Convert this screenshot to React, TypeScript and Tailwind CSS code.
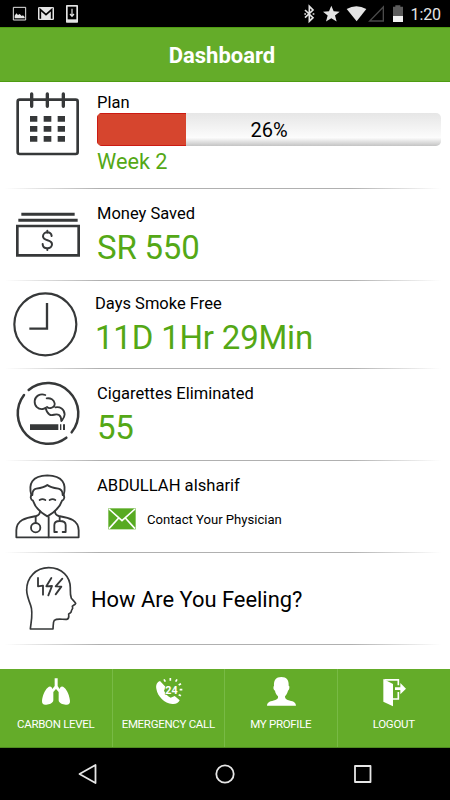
import type { ReactNode } from "react";
import clsx from "clsx";

const GREEN_TEXT = "text-[#54a816]";

function StatusBar() {
  return (
    <div className="flex h-[27px] items-center justify-between bg-black pl-[12px] pr-[9px]">
      <svg width="68" height="27" viewBox="36 0 204 81" className="text-[#e4e4e4]">
        <path d="M40 22h37v38H40z" fill="none" stroke="currentColor" strokeWidth="3" />
        <path d="M44 55V47l5-7 5 5 5-3 6 6 4-2 5 5v4z" fill="currentColor" />
        <rect x="114" y="21" width="48" height="39" rx="4" fill="currentColor" />
        <path d="M121 56V29l17 15 17-15v27" fill="none" stroke="#000" strokeWidth="5" />
        <rect x="198" y="15" width="36" height="53" rx="2" fill="currentColor" />
        <path d="M203 20h26v38h-26z" fill="#000" />
        <path d="M216 26v21M210 42l6 7 6-7" fill="none" stroke="currentColor" strokeWidth="3.5" />
      </svg>
      <div className="flex items-center">
        <svg width="106" height="27" viewBox="240 0 318 81" className="overflow-visible text-[#e4e4e4]">
          <path
            d="M240 30l24 23-11 11V19l11 11-24 23"
            fill="none"
            stroke="currentColor"
            strokeWidth="5"
          />
          <path d="M238 42h5M263 42h5" stroke="currentColor" strokeWidth="4" />
          <path
            d="M319 17l7 17 18 1.5-14 11 5 18-16-10-16 10 5-18-14-11 18-1.5z"
            fill="currentColor"
          />
          <path d="M365 27q29-17 59 0l-29 37z" fill="currentColor" />
          <path d="M475 21v42h-41z" fill="none" stroke="#4a4a4a" strokeWidth="4" />
          <path d="M504 20h7v-4h15v4h8v28h-30z" fill="#5c5c5c" />
          <path d="M504 48h30v18h-30z" fill="#f2f2f2" />
        </svg>
        <span className="pt-[2px] text-[16px] leading-[25px] tracking-[-0.1px] text-[#e6e6e6]">
          1:20
        </span>
      </div>
    </div>
  );
}

const ink = {
  fill: "none",
  stroke: "#363839",
  strokeLinejoin: "round",
  strokeLinecap: "round",
} as const;

function CalendarIcon() {
  return (
    <svg width="84" height="107" viewBox="0 -9 252 321">
      <rect x="53" y="44" width="180" height="163" rx="6" {...ink} strokeWidth="8" />
      <path d="M95 27v37M142 27v37M190 27v37" {...ink} strokeWidth="10" />
      {[93, 123, 153].map((y) => (
        <path key={y} d={`M90 ${y}h22v17h-22zM131 ${y}h23v17h-23zM173 ${y}h22v17h-22z`} fill="#363839" />
      ))}
    </svg>
  );
}

function MoneyIcon() {
  return (
    <svg width="84" height="92" viewBox="0 -33 252 276">
      <path d="M64 43h160M55 61h178" stroke="#363839" strokeWidth="9" />
      <path d="M52 78h184v88H52z" fill="none" stroke="#363839" strokeWidth="8" />
      <path
        d="M155 108c-1-7-6-11-13-11s-13 5-13 12c0 16 27 8 27 24 0 7-6 12-14 12s-14-5-14-13M142 92v6M142 145v5"
        {...ink}
        strokeWidth="6"
      />
    </svg>
  );
}

function ClockIcon() {
  return (
    <svg width="84" height="88" viewBox="0 3 252 264">
      <circle cx="136" cy="133" r="93" {...ink} strokeWidth="6.5" />
      <path d="M141 69v77H88" fill="none" stroke="#363839" strokeWidth="7" />
    </svg>
  );
}

function SmokingIcon() {
  return (
    <svg width="84" height="92" viewBox="0 -9 252 276">
      <path d="M86 54A91 91 0 0 1 215 181" {...ink} strokeWidth="7.5" />
      <path d="M72 69A91 91 0 0 0 199 197" {...ink} strokeWidth="7.5" />
      <path d="M90 157h85v17H90zM180 157h4v17h-4zM189 157h6v17h-6z" fill="#363839" />
      <path
        d="M136 69c-15-6-31 3-32 18s10 26 25 24c3 0 5-2 8-4 1 8 3 15 12 21 9 5 18-5 28 1 6 4 7 11 7 18"
        {...ink}
        strokeWidth="5.5"
      />
      <path
        d="M140 79c12-2 22 5 24 15 1 8-5 12-11 14-5 1-10-1-12-3M166 106c14-2 27 4 28 21 0 7-4 13-8 18"
        {...ink}
        strokeWidth="5.5"
      />
    </svg>
  );
}

function DoctorIcon() {
  return (
    <svg width="84" height="92" viewBox="0 -12 252 276">
      <g {...ink} strokeWidth="5.5">
        <path d="M94 90c-9-33 1-58 48-59 47 1 58 26 49 59" />
        <path d="M97 90c0-12 3-17 12-19 14-2 25-4 33-11 8 7 19 9 33 11 9 2 13 7 13 19" />
        <path d="M95 90c-5 5-3 14 4 17 6 19 20 34 43 47 23-13 38-28 44-47 7-3 9-12 4-17" />
        <path d="M119 105q8-5 17 0M149 105q9-5 17 0" />
        <path d="M120 139c0 8-4 12-11 14-34 6-59 12-60 43v21h187v-21c-1-31-26-37-60-43-7-2-11-6-11-14" />
        <path d="M146 156v61M107 155v18" />
        <circle cx="107" cy="188" r="14" />
        <path d="M179 155v13M171 201h-8v-21c0-8 5-12 16-12s18 4 18 12v21h-9" />
      </g>
    </svg>
  );
}

function MindIcon() {
  return (
    <svg width="84" height="92" viewBox="0 -6 252 276">
      <path
        d="M91 222c3-27 9-51 1-71-7-18-12-31-12-46 0-38 28-67 66-67 40 0 65 27 65 61 0 9-1 20 3 31 4 5 10 9 13 15-2 5-8 6-10 9 1 4 2 6 0 8-2 3-3 4-3 7 0 5-5 5-8 8 1 8 0 15-6 16-12 1-29-4-37 3-4 5-3 13-4 26z"
        {...ink}
        strokeWidth="5"
      />
      <path
        d="M114 69v25l15-2v27M154 69l-15 25 17-1-11 28M187 71l-20 23 17 1-17 23"
        {...ink}
        strokeWidth="5.5"
      />
    </svg>
  );
}

function EnvelopeIcon() {
  return (
    <svg width="28" height="22" viewBox="0 0 84 66">
      <rect x="1" y="1" width="82" height="63" fill="#58aa22" />
      <path d="M3 3l39 35L81 3M3 62l29-32M81 62L52 30" fill="none" stroke="#fff" strokeWidth="5" />
    </svg>
  );
}

function Row({
  icon,
  className,
  children,
}: {
  icon: ReactNode;
  className: string;
  children: ReactNode;
}) {
  return (
    <div className={clsx("relative flex", className)}>
      <div className="w-[84px] shrink-0">{icon}</div>
      <div className="min-w-0 flex-1">{children}</div>
      <div className="absolute inset-x-0 bottom-0 h-px bg-[linear-gradient(to_right,transparent_1%,#b0b0b0_22%,#b0b0b0_78%,transparent_98%)]" />
    </div>
  );
}

function Stat({ label, value }: { label: string; value: string }) {
  return (
    <>
      <p className="text-[16.5px] leading-5">{label}</p>
      <p className={clsx("mt-[4px] text-[33px] leading-10 tracking-[-0.2px]", GREEN_TEXT)}>
        {value}
      </p>
    </>
  );
}

const TABS = [
  {
    label: "CARBON LEVEL",
    icon: (
      <svg width="32" height="32" viewBox="120 108 96 96" fill="#fff">
        <path d="M164 115h9v23l6 9c3-9 8-9 14-4 9 8 16 24 17 40 0 9-4 12-13 11-9 0-21-5-21-13v-25l-8-9-8 9v25c0 8-12 13-21 13-9 1-13-2-13-11 1-16 8-32 17-40 6-5 11-5 14 4l7-9z" />
      </svg>
    ),
  },
  {
    label: "EMERGENCY CALL",
    icon: (
      <svg width="32" height="32" viewBox="456 108 96 96" fill="#fff">
        <path d="M480 123c-9 3-13 12-11 23 4 24 24 43 48 46 10 1 19-3 22-11l-15-13-12 5c-9-5-15-11-20-21l5-11z" />
        <path
          d="M492 118l4 7M511 114v8M531 118l-4 7M543 131l-7 4M547 149h-8M543 167l-7-3"
          stroke="#fff"
          strokeWidth="5"
        />
        <text
          x="496"
          y="161"
          fontSize="34"
          fontWeight="700"
          fontFamily="Roboto, sans-serif"
          textLength="37"
          lengthAdjust="spacingAndGlyphs"
          stroke="#64ac29"
          strokeWidth="4"
          paintOrder="stroke"
        >
          24
        </text>
      </svg>
    ),
  },
  {
    label: "MY PROFILE",
    icon: (
      <svg width="32" height="32" viewBox="120 108 96 96" fill="#fff">
        <path d="M169 111c16 0 23 9 22 26l2 2c1 6-1 11-4 13-2 8-5 13-9 17 0 6 2 9 8 11 15 4 24 5 25 17H126c1-12 11-13 25-17 7-2 9-5 8-11-4-4-8-9-9-17-4-2-6-7-4-13l1-2c-1-17 6-26 22-26z" />
      </svg>
    ),
  },
  {
    label: "LOGOUT",
    icon: (
      <svg width="32" height="32" viewBox="459 108 96 96" fill="#fff">
        <path d="M475 117l29 15v67l-29-14z" />
        <path d="M478 119.5h42V136M520 156v21h-16" fill="none" stroke="#fff" strokeWidth="5" />
        <path d="M510 142h16v-13l17 17-17 17v-13h-16z" />
      </svg>
    ),
  },
];

export default function App() {
  return (
    <div className="flex h-[800px] w-[450px] flex-col overflow-hidden bg-white font-['Roboto',sans-serif] text-black">
      <StatusBar />

      <header className="flex h-[55px] items-center justify-center border-y border-[#4e9c12] bg-[#64ac29] pr-[6px] pt-[3px]">
        <h1 className="text-[22px] font-bold leading-7 text-white">Dashboard</h1>
      </header>

      <main className="flex-1">
        <Row icon={<CalendarIcon />} className="h-[107px]">
          <div className="pl-[13px] pr-[9px] pt-[11px]">
            <p className="text-[16.5px] leading-5">Plan</p>
            <div className="relative h-[33px] overflow-hidden rounded-[5px] bg-linear-to-b from-[#e6e6e6] via-[#fcfcfc] via-75% to-[#c4c4c4]">
              <div className="h-full w-[26%] border-y border-l border-[#cc1a12] bg-[#d6452e]" />
              <span className="absolute inset-0 text-center text-[20px] leading-[34px]">26%</span>
            </div>
            <p className={clsx("mt-[2px] text-[21.7px] leading-7", GREEN_TEXT)}>Week 2</p>
          </div>
        </Row>

        <Row icon={<MoneyIcon />} className="h-[92px]">
          <div className="pl-[13px] pt-[15px]">
            <Stat label="Money Saved" value="SR 550" />
          </div>
        </Row>

        <Row icon={<ClockIcon />} className="h-[88px]">
          <div className="pl-[11px] pt-[13px]">
            <Stat label="Days Smoke Free" value="11D 1Hr 29Min" />
          </div>
        </Row>

        <Row icon={<SmokingIcon />} className="h-[92px]">
          <div className="pl-[13px] pt-[15px]">
            <Stat label="Cigarettes Eliminated" value="55" />
          </div>
        </Row>

        <Row icon={<DoctorIcon />} className="h-[92px]">
          <div className="pl-[13px] pt-[15px]">
            <p className="text-[16.6px] leading-5">ABDULLAH alsharif</p>
            <div className="mt-[12px] flex items-center gap-[11px] pl-[11px]">
              <EnvelopeIcon />
              <span className="pt-[2px] text-[13.1px] leading-5">Contact Your Physician</span>
            </div>
          </div>
        </Row>

        <Row icon={<MindIcon />} className="h-[92px]">
          <p className="pl-[7px] pt-[32px] text-[21.9px] leading-[30px]">How Are You Feeling?</p>
        </Row>
      </main>

      <nav className="grid h-[79px] grid-cols-4 border-b border-[#4f8a20] bg-[#64ac29]">
        {TABS.map(({ label, icon }, i) => (
          <button
            key={label}
            className={clsx(
              "flex flex-col items-center pt-[7px] text-white",
              i < TABS.length - 1 && "border-r border-[#78ba45]"
            )}
          >
            {icon}
            <span className="mt-[8px] whitespace-nowrap text-[11.5px] leading-[17px] tracking-[-0.3px]">
              {label}
            </span>
          </button>
        ))}
      </nav>

      <div className="flex h-[52px] items-center justify-center bg-black">
        <svg
          width="300"
          height="52"
          viewBox="0 0 300 52"
          fill="none"
          stroke="#e6e6e6"
          strokeWidth="1.8"
          strokeLinejoin="round"
        >
          <path d="M20.5 17v18L4.5 26z" />
          <circle cx="150" cy="26" r="8.7" />
          <rect x="280" y="18" width="15.5" height="16" />
        </svg>
      </div>
    </div>
  );
}
